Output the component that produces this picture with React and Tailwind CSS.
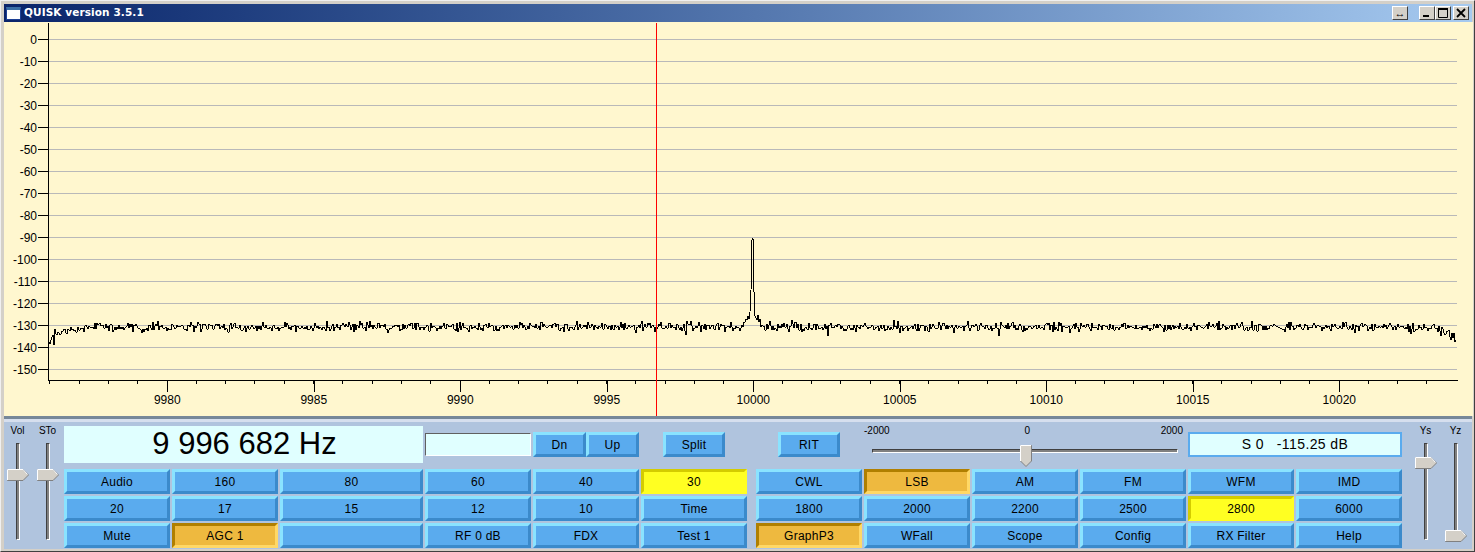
import React from 'react';

const FONT = '"Liberation Sans", Arial, sans-serif';

// plot geometry, in px inside the svg
const TOP = 22; // svg starts under the title bar
const DB = Array.from({ length: 16 }, (_, i) => -i * 10);
const yOf = (db) => 39 - TOP - (db / 10) * 22;
const xOf = (khz) => 167.3 + (khz - 9980) * 29.3;
const AXIS_Y = 380 - TOP;

function rng(seed) {
    let a = seed;
    return () => {
        a = (a + 0x6d2b79f5) | 0;
        let t = Math.imul(a ^ (a >>> 15), 1 | a);
        t = (t + Math.imul(t ^ (t >>> 7), 61 | t)) ^ t;
        return ((t ^ (t >>> 14)) >>> 0) / 4294967296;
    };
}

function buildTrace() {
    const r = rng(74);
    const pts = [];
    for (let x = 49; x <= 1456; x++) {
        let base = 327;
        if (x < 65) base = 341 - (x - 49) * 0.8;
        else if (x < 90) base = 330 - (x - 65) * 0.12;
        if (x > 1436) base = 328 + (x - 1436) * 0.62;
        let n = (r() + r() + r() - 1.5) * 4.6;
        if (r() < 0.05) n -= 4 * r();
        if (r() < 0.05) n += 4 * r();
        let y = base + n;
        if (x < 65) y += (r() - 0.5) * 6;
        if (x >= 744 && x <= 760) {
            const peak = { 744: 322, 745: 322, 746: 319, 747: 320, 748: 316, 749: 319, 750: 312, 751: 290, 752: 240, 753: 238, 754: 292, 755: 316, 756: 318, 757: 320, 758: 315, 759: 322, 760: 319 };
            y = peak[x];
        }
        pts.push(`${x},${Math.round(y) - TOP}`);
    }
    return pts.join(' ');
}

const TRACE = buildTrace();

function Plot() {
    const minor = Array.from({ length: 48 }, (_, i) => 49.3 + i * 29.3);
    const major = [9980, 9985, 9990, 9995, 10000, 10005, 10010, 10015, 10020];
    return (
        <svg width="1469" height="394" viewBox="4 0 1469 394" className="block bg-[#fff7cf]" fontFamily={FONT} fontSize="12">
            <g shapeRendering="crispEdges">
                {DB.map((d) => (
                    <g key={d}>
                        <line x1="49" x2="1457" y1={yOf(d) + 0.5} y2={yOf(d) + 0.5} stroke="#b9b9b9" />
                        <line x1="38" x2="48" y1={yOf(d) + 0.5} y2={yOf(d) + 0.5} stroke="#000" />
                    </g>
                ))}
                <line x1="48.5" x2="48.5" y1="1" y2={AXIS_Y + 1} stroke="#000" />
                <line x1="48" x2="1458" y1={AXIS_Y + 0.5} y2={AXIS_Y + 0.5} stroke="#000" />
                {minor.map((x) => (
                    <line key={x} x1={Math.round(x) + 0.5} x2={Math.round(x) + 0.5} y1={AXIS_Y} y2={AXIS_Y + 4} stroke="#000" />
                ))}
                {major.map((k) => (
                    <line key={k} x1={Math.round(xOf(k)) + 0.5} x2={Math.round(xOf(k)) + 0.5} y1={AXIS_Y} y2={AXIS_Y + 12} stroke="#000" />
                ))}
                <polyline points={TRACE} fill="none" stroke="#000" strokeWidth="1" />
                <line x1="656.5" x2="656.5" y1="1" y2="394" stroke="#ff0000" />
            </g>
            {DB.map((d) => (
                <text key={d} x="37" y={yOf(d) + 4.5} textAnchor="end" fill="#000">{d}</text>
            ))}
            {major.map((k) => (
                <text key={k} x={xOf(k)} y={AXIS_Y + 24} textAnchor="middle" fill="#000">{k}</text>
            ))}
        </svg>
    );
}

function Btn({ label, on, wide }) {
    let look = 'bg-[#5aabee] border-t-[#8ae3ff] border-l-[#8ae3ff] border-r-[#3b8acb] border-b-[#3b8acb]';
    if (on === 'amber') look = 'bg-[#eeb93f] border-t-[#b07f00] border-l-[#b07f00] border-r-[#ffd866] border-b-[#ffd866] pt-[1px]';
    if (on === 'yellow') look = 'bg-[#ffff22] border-t-[#d4cc00] border-l-[#d4cc00] border-r-[#ffff22] border-b-[#ffff22] pt-[1px]';
    return (
        <div className={`flex items-center justify-center h-[25px] border-[3px] text-[12px] tracking-[0.25px] text-black ${wide || ''} ${look}`}>
            {label}
        </div>
    );
}

function ThumbRight() {
    return (
        <svg width="22" height="12" viewBox="0 0 22 12" className="block">
            <polygon points="0.5,0.5 16,0.5 21.5,6 16,11.5 0.5,11.5" fill="#d4d0c8" stroke="#808080" />
            <polyline points="0.5,11 0.5,0.5 16,0.5 20.5,5.5" fill="none" stroke="#fff" />
        </svg>
    );
}

function VSlider({ label, thumbTop }) {
    return (
        <div className="relative flex flex-col items-center w-[27px]">
            <div className="h-[17px] text-[10px] leading-[10px] pt-[0px] text-black">{label}</div>
            <div className="w-[4px] h-[97px] bg-[#808080] border-l border-l-[#404040] border-r border-r-white border-t border-t-[#404040] border-b border-b-white" />
            <div className="absolute left-[3px]" style={{ top: thumbTop }}>
                <ThumbRight />
            </div>
        </div>
    );
}

function HSlider() {
    return (
        <div className="relative w-[320px] h-[37px] text-[10px] leading-[10px] text-black">
            <div className="flex justify-between pr-[1px]">
                <span>-2000</span>
                <span className="ml-[4px]">0</span>
                <span>2000</span>
            </div>
            <div className="mt-[13px] ml-[8px] w-[306px] h-[4px] bg-[#808080] border-t border-t-[#404040] border-b border-b-white border-l border-l-[#404040] border-r border-r-white" />
            <svg width="12" height="22" viewBox="0 0 12 22" className="absolute left-[156px] top-[19px]">
                <polygon points="0.5,0.5 11.5,0.5 11.5,16 6,21.5 0.5,16" fill="#d4d0c8" stroke="#808080" />
                <polyline points="0.5,16 0.5,0.5 11,0.5" fill="none" stroke="#fff" />
            </svg>
        </div>
    );
}

const ROWS = [
    ['Audio', '160', '80', '60', '40', '30', null, 'CWL', 'LSB', 'AM', 'FM', 'WFM', 'IMD'],
    ['20', '17', '15', '12', '10', 'Time', null, '1800', '2000', '2200', '2500', '2800', '6000'],
    ['Mute', 'AGC 1', '', 'RF 0 dB', 'FDX', 'Test 1', null, 'GraphP3', 'WFall', 'Scope', 'Config', 'RX Filter', 'Help'],
];
const LIT = { 'AGC 1': 'amber', LSB: 'amber', GraphP3: 'amber', 30: 'yellow', 2800: 'yellow' };

function TitleBar() {
    return (
        <div className="flex items-center h-[18px] pl-[2px] pr-[3px] bg-linear-to-r from-[#0a246a] to-[#a6caf0]">
            <div className="w-[15px] h-[13px] bg-white border-t-[3px] border-t-[#3a6ea5] border-l border-l-[#1c3f94] border-r border-r-[#1c3f94] border-b border-b-[#1c3f94]" />
            <span className="ml-[3px] text-[11px] font-bold text-white tracking-[0.1px]" style={{ fontFamily: '"DejaVu Sans", sans-serif', fontSize: '10.5px' }}>QUISK version 3.5.1</span>
            <div className="ml-auto flex items-center">
                <WinBtn><span className="text-[11px] leading-none text-black">↔</span></WinBtn>
                <div className="w-[11px]" />
                <WinBtn>
                    <svg width="10" height="10" viewBox="0 0 10 10"><rect x="1" y="7" width="6" height="2" fill="#000" /></svg>
                </WinBtn>
                <WinBtn>
                    <svg width="10" height="10" viewBox="0 0 10 10"><path d="M0.5 1.5h9v8h-9zM0.5 1.5h9" fill="none" stroke="#000" /><rect y="0" width="10" height="2" fill="#000" /></svg>
                </WinBtn>
                <div className="w-[2px]" />
                <WinBtn>
                    <svg width="10" height="10" viewBox="0 0 10 10"><path d="M1 1l8 8M9 1l-8 8" stroke="#000" strokeWidth="1.8" /></svg>
                </WinBtn>
            </div>
        </div>
    );
}

function WinBtn({ children }) {
    return (
        <div className="flex items-center justify-center w-[16px] h-[14px] bg-[#d4d0c8] border-t border-l border-t-white border-l-white border-r border-b border-r-[#404040] border-b-[#404040]">
            {children}
        </div>
    );
}

export default function App() {
    return (
        <div className="w-[1475px] h-[552px] overflow-hidden bg-[#d4d0c8] border-t border-l border-t-[#f0f0f0] border-l-[#f0f0f0] border-r border-b border-r-[#404040] border-b-[#404040] pt-[3px] pl-[3px] pr-[2px]" style={{ fontFamily: FONT }}>
            <TitleBar />
            <Plot />
            <div className="h-[3px] bg-[#778899]" />
            <div className="h-[3px] bg-[#d6dfee]" />

            <div className="flex h-[127px] pt-[4px] bg-[#b0c4de]">
                <div className="flex gap-[3px] w-[60px]">
                    <VSlider label="Vol" thumbTop={43} />
                    <VSlider label="STo" thumbTop={43} />
                </div>

                <div className="w-[1338px]">
                    <div className="flex items-center h-[37px] mb-[6px]">
                        <div className="flex items-center justify-center w-[359px] h-[37px] bg-[#e0ffff] text-[31px] text-black pl-[2px]">9 996 682 Hz</div>
                        <div className="ml-[2px] w-[106px] h-[23px] bg-[#e0ffff] border-t border-l border-t-[#606060] border-l-[#606060] border-r border-b border-r-white border-b-white" />
                        <div className="ml-[2px] flex">
                            <Btn label="Dn" wide="w-[53px]" />
                            <Btn label="Up" wide="w-[53px]" />
                        </div>
                        <div className="ml-[24px]"><Btn label="Split" wide="w-[62px]" /></div>
                        <div className="ml-[53px]"><Btn label="RIT" wide="w-[62px]" /></div>
                        <div className="ml-[24px]"><HSlider /></div>
                        <div className="ml-[4px] flex items-center justify-center w-[214px] h-[25px] bg-[#e0ffff] border-2 border-[#5aabee] text-[14px] tracking-[0.4px] text-black whitespace-pre">S 0   -115.25 dB</div>
                    </div>

                    <div className="grid grid-cols-[106px_106px_143px_106px_106px_106px_5px_106px_106px_106px_106px_106px_106px] gap-x-[2px] gap-y-[2px]">
                        {ROWS.flat().map((label, i) => (
                            label === null
                                ? <div key={i} />
                                : <Btn key={i} label={label} on={LIT[label]} />
                        ))}
                    </div>
                </div>

                <div className="flex gap-[3px] ml-[10px]">
                    <VSlider label="Ys" thumbTop={31} />
                    <VSlider label="Yz" thumbTop={104} />
                </div>
            </div>
        </div>
    );
}
